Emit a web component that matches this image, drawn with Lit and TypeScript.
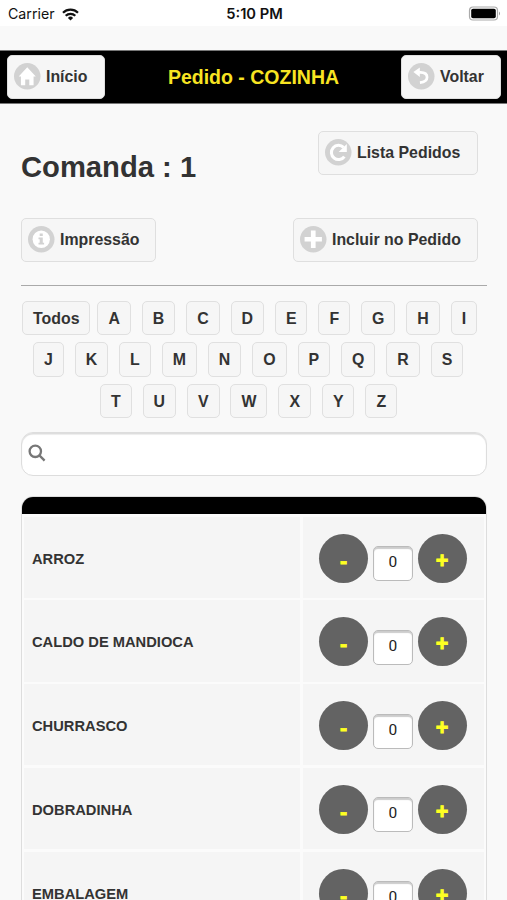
import { LitElement, html, css, svg } from "lit";
import { customElement, property } from "lit/decorators.js";

const glyphs: Record<string, unknown> = {
  home: svg`<path fill="#fff" d="M13 4.200 4.600 13.200h2.200v8.600h4.200v-5.600h4v5.600h4.200v-8.600h2.200z"/>`,
  back: svg`<path fill="none" stroke="#fff" stroke-width="2.700" d="M9 9.200h3.200c3.800 0 6.500 1.700 6.500 4.800 0 3-2.600 4.800-7 5.300"/><path fill="#fff" d="M5.300 8.900 11.600 4.300v9.400z"/>`,
  refresh: svg`<path fill="none" stroke="#fff" stroke-width="3" d="M19 17.200a7 7 0 1 1-.8-9"/><path fill="#fff" d="M21.400 4.800v8h-8z"/>`,
  info: svg`<circle cx="13" cy="13" r="8.500" fill="#fff"/><path fill="#d2d2d2" d="M11.500 7.400h3v2.500h-3zM10.300 11.200h4.200v5.300h1.300v1.700h-5.500v-1.700h1.200v-3.600h-1.200z"/>`,
  plus: svg`<path fill="#fff" d="M10.700 4.500h4.600v6.200h6.200v4.600h-6.200v6.200h-4.600v-6.200h-6.200v-4.600h6.200z"/>`,
};

@customElement("icon-button")
class IconButton extends LitElement {
  @property() icon = "";
  @property() label = "";
  static styles = css`
    :host { display: block; }
    .btn {
      display: flex; align-items: center; box-sizing: border-box; width: 100%; height: 44px;
      padding: 0 0 0 6px; border: 1px solid #dfdfdf; border-radius: 5px; background: #f6f6f6;
      font: bold 15.9px/44px "Liberation Sans", Arial, sans-serif; color: #333; white-space: nowrap;
    }
    .icon { width: 26.500px; height: 26.500px; margin-right: 5.500px; flex: none; }
    .label { padding-top: 1px; }
  `;
  render() {
    return html`<div class="btn">
      <svg class="icon" viewBox="0 0 26 26"><circle cx="13" cy="13" r="13" fill="#d2d2d2"/>${glyphs[this.icon]}</svg>
      <span class="label">${this.label}</span>
    </div>`;
  }
}

@customElement("quantity-row")
class QuantityRow extends LitElement {
  @property() name = "";
  static styles = css`
    :host { display: grid; grid-template-columns: 275.500px 1fr; column-gap: 3px; height: 81.3px; }
    .name, .controls { background: #f5f5f5; display: flex; }
    .name { align-items: center; padding: 3px 0 0 8px; font-size: 14.7px; font-weight: bold; }
    .controls { padding: 17px 0 0 16.500px; }
    .round {
      flex: none; width: 49px; height: 49px; border-radius: 50%; background: #636363; color: #ff2;
      font-weight: bold; font-size: 21.500px; line-height: 54px; text-align: center; -webkit-text-stroke: 0.9px #ff2;
    }
    .value {
      box-sizing: border-box; width: 39.500px; height: 35px; margin: 12.500px 5px 0; border: 1px solid #bbb;
      border-radius: 5px; background: #fff; box-shadow: inset 0 2px 1px #ccc;
      font: 15.500px/30px Roboto, sans-serif; text-align: center; color: #222;
    }
  `;
  render() {
    return html`<div class="name">${this.name}</div>
      <div class="controls"><div class="round">-</div><div class="value">0</div><div class="round">+</div></div>`;
  }
}

@customElement("app-root")
class AppRoot extends LitElement {
  static styles = css`
    :host {
      display: block; box-sizing: border-box; width: 507px; height: 900px; overflow: hidden;
      background: #f9f9f9; color: #333; font-family: "Liberation Sans", Arial, sans-serif;
    }
    .status {
      height: 26px; margin-bottom: 23.500px; background: #fff; color: #111; display: grid;
      grid-template-columns: 1fr auto 1fr; align-items: center; padding: 0 6px 0 8px;
      font: 14.200px/26px Inter, sans-serif; box-sizing: border-box;
    }
    .carrier { display: flex; align-items: center; gap: 7px; padding-top: 1px; }
    .time { font-weight: 600; font-size: 14.700px; padding-top: 1px; }
    .battery { justify-self: end; display: block; }
    .header {
      box-sizing: border-box; height: 54px; background: #000; display: grid;
      grid-template-columns: 98px 1fr 100px; align-items: center; padding: 0 6px 0 7px;
      border: solid #777; border-width: 1px 0;
    }
    .title { text-align: center; color: #f8e422; font-size: 19.500px; font-weight: bold; padding: 2px 0 0 1px; }
    .page { padding: 27px 20px 0 21px; }
    .line { display: flex; justify-content: space-between; height: 87px; padding-right: 9px; }
    .comanda { font-size: 29.200px; font-weight: bold; line-height: 34px; padding-top: 19px; }
    .list { width: 160px; }
    .print { width: 135px; }
    .include { width: 185px; }
    .second { height: 67px; }
    .rule { height: 1.500px; background: #aaa; margin-bottom: 14.500px; }
    .keys { display: flex; gap: 10.900px; height: 34.500px; margin-bottom: 7px; }
    .first { padding-left: 1px; }
    .middle { padding-left: 12px; }
    .last { padding-left: 79px; }
    .key {
      box-sizing: border-box; border: 1px solid #e0e0e0; border-radius: 5px; background: #f6f6f6;
      padding: 0 10px; font-size: 15.900px; line-height: 33px; font-weight: bold;
    }
    .wide { margin-right: -4px; }
    .search {
      box-sizing: border-box; height: 44.500px; margin: 13.500px 0 20px; border: 1.500px solid #ddd; border-radius: 12px;
      background: #fff; box-shadow: inset 0 1.500px 1px #ddd; display: flex; align-items: center; padding: 0 0 2px 6px;
    }
    .table { border: 1px solid #ddd; border-radius: 12px 12px 0 0; overflow: hidden; background: #fbfbfb; }
    .thead { height: 18px; background: #000; margin: -1px -1px 2.500px; }
    .rows { display: flex; flex-direction: column; gap: 2.500px; padding: 0 2px; }
  `;
  render() {
    const keys = (letters: string, kind: string) => html`<div class="keys ${kind}">
      ${kind === "first" ? html`<div class="key wide">Todos</div>` : ""}${[...letters].map((l) => html`<div class="key">${l}</div>`)}
    </div>`;
    return html`
      <div class="status">
        <div class="carrier"><span>Carrier</span>
          <svg width="17" height="13" viewBox="0 0 17 13" fill="none" stroke="#111" stroke-width="2.200">
            <path d="M1 4.800a10.600 10.600 0 0 1 15 0"/><path d="M3.700 7.800a6.800 6.800 0 0 1 9.600 0"/>
            <path fill="#111" stroke="none" d="M8.500 12.500 5.900 9.900a3.700 3.700 0 0 1 5.200 0z"/>
          </svg>
        </div>
        <span class="time">5:10 PM</span>
        <svg class="battery" width="33" height="15" viewBox="0 0 33 15">
          <rect x="1.500" y="1" width="28" height="13" rx="3.500" fill="none" stroke="#aaa" stroke-width="1.200"/>
          <rect x="3.200" y="2.700" width="24.600" height="9.600" rx="1.800"/><path fill="#999" d="M31 5.500q2 2 0 4z"/>
        </svg>
      </div>
      <div class="header">
        <icon-button icon="home" label="Início"></icon-button>
        <div class="title">Pedido - COZINHA</div>
        <icon-button icon="back" label="Voltar"></icon-button>
      </div>
      <div class="page">
        <div class="line">
          <div class="comanda">Comanda : 1</div>
          <icon-button class="list" icon="refresh" label="Lista Pedidos"></icon-button>
        </div>
        <div class="line second">
          <icon-button class="print" icon="info" label="Impressão"></icon-button>
          <icon-button class="include" icon="plus" label="Incluir no Pedido"></icon-button>
        </div>
        <div class="rule"></div>
        ${keys("ABCDEFGHI", "first")}${keys("JKLMNOPQRS", "middle")}${keys("TUVWXYZ", "last")}
        <div class="search">
          <svg width="18" height="18" viewBox="0 0 18 18" fill="none" stroke="#777" stroke-width="2.300">
            <circle cx="7.300" cy="7.300" r="5.700"/><path d="m11.400 11.400 5.200 5.200"/>
          </svg>
        </div>
        <div class="table">
          <div class="thead"></div>
          <div class="rows">
            ${["ARROZ", "CALDO DE MANDIOCA", "CHURRASCO", "DOBRADINHA", "EMBALAGEM"].map((n) => html`<quantity-row name=${n}></quantity-row>`)}
          </div>
        </div>
      </div>`;
  }
}
